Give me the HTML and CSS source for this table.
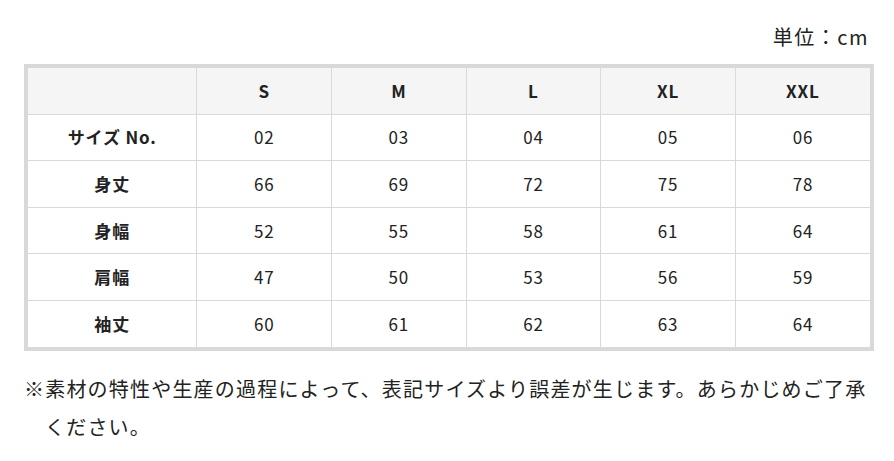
FILE: index.html
```html
<!DOCTYPE html>
<html lang="ja">
<head>
<meta charset="utf-8">
<link rel="stylesheet" href="styles.css">
</head>
<body>
<div class="page">
  <p class="unit">単位：cm</p>
  <div class="table-frame">
    <table class="size-table">
      <thead>
        <tr><th></th><th>S</th><th>M</th><th>L</th><th>XL</th><th>XXL</th></tr>
      </thead>
      <tbody>
        <tr><th>サイズ No.</th><td>02</td><td>03</td><td>04</td><td>05</td><td>06</td></tr>
        <tr><th>身丈</th><td>66</td><td>69</td><td>72</td><td>75</td><td>78</td></tr>
        <tr><th>身幅</th><td>52</td><td>55</td><td>58</td><td>61</td><td>64</td></tr>
        <tr><th>肩幅</th><td>47</td><td>50</td><td>53</td><td>56</td><td>59</td></tr>
        <tr><th>袖丈</th><td>60</td><td>61</td><td>62</td><td>63</td><td>64</td></tr>
      </tbody>
    </table>
  </div>
  <p class="note">※素材の特性や生産の過程によって、表記サイズより誤差が生じます。あらかじめご了承ください。</p>
</div>
</body>
</html>
```
FILE: styles.css
```css
html, body {
  margin: 0;
  padding: 0;
  background: #fff;
}
body {
  font-family: "Noto Sans CJK JP", "Noto Sans", sans-serif;
  color: #222;
}
.page {
  padding: 18px 20px 0 24px;
}
.unit {
  margin: 0 0 8px;
  text-align: right;
  font-size: 20px;
  line-height: 38px;
  letter-spacing: 1.5px;
  padding-right: 5px;
}
.table-frame {
  border: 4px solid #d9d9d9;
}
.size-table {
  width: 100%;
  border-collapse: collapse;
  table-layout: fixed;
}
.size-table th,
.size-table td {
  padding: 10.8px 0;
  line-height: 24px;
  font-size: 17px;
  letter-spacing: 0.05em;
  text-align: center;
  border-right: 1px solid #d9d9d9;
  border-bottom: 1px solid #d9d9d9;
}
.size-table th:first-child {
  width: 20%;
}
.size-table th {
  font-weight: 700;
}
.size-table td {
  font-weight: 400;
}
.size-table tr > :last-child {
  border-right: none;
}
.size-table tbody tr:last-child > * {
  border-bottom: none;
}
.size-table thead th {
  background: #f5f5f5;
}
.note {
  margin: 19px 0 0;
  font-size: 20px;
  line-height: 38px;
  letter-spacing: 1.2px;
  padding-left: 21px;
  text-indent: -21px;
}
```
